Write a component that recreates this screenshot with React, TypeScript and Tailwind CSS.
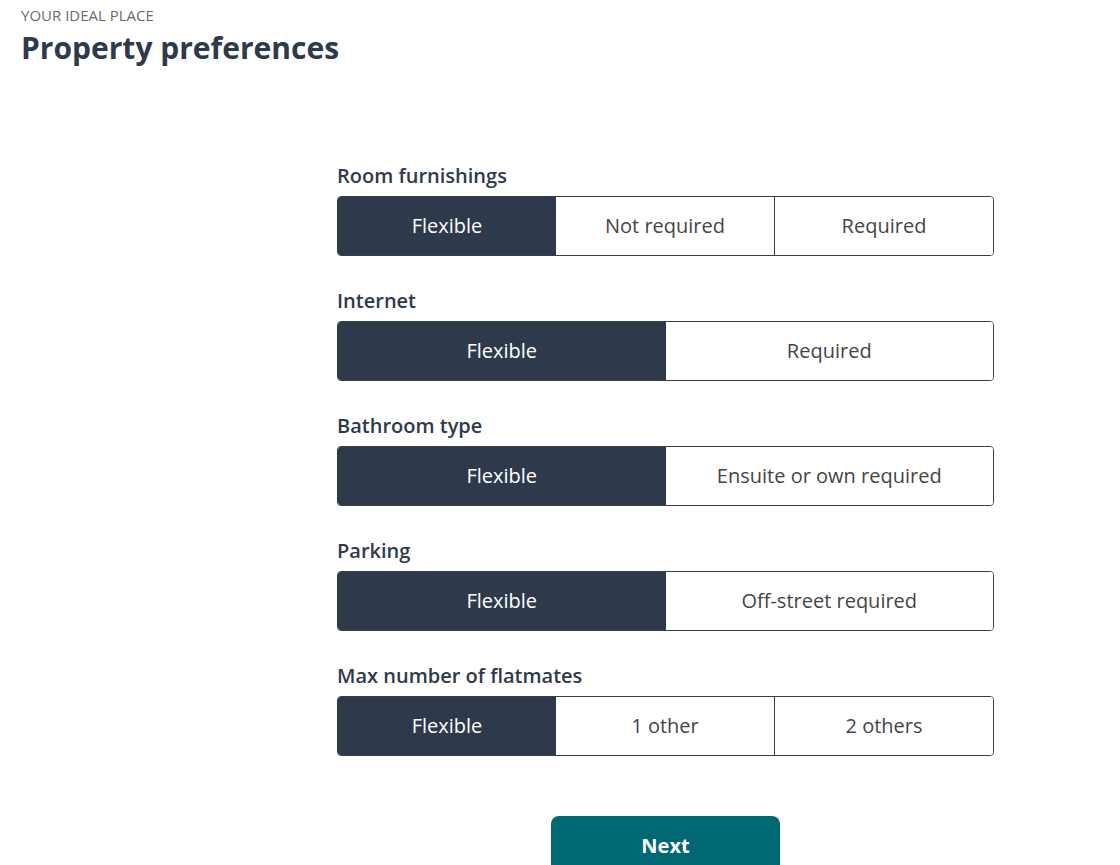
const dark = "bg-[#2e3a4b] text-white";

type Group = { label: string; options: string[] };

const groups: Group[] = [
  { label: "Room furnishings", options: ["Flexible", "Not required", "Required"] },
  { label: "Internet", options: ["Flexible", "Required"] },
  { label: "Bathroom type", options: ["Flexible", "Ensuite or own required"] },
  { label: "Parking", options: ["Flexible", "Off-street required"] },
  { label: "Max number of flatmates", options: ["Flexible", "1 other", "2 others"] },
];

function Segmented({ options }: { options: string[] }) {
  return (
    <div className="flex h-[60px] overflow-hidden rounded-[4px] border border-[#3a3f47]">
      {options.map((opt, i) => (
        <button
          key={opt}
          className={
            "flex flex-1 items-center justify-center text-[20px] " +
            (i === 0
              ? dark
              : "bg-white text-[#454545] " + (i > 1 ? "border-l border-[#3a3f47]" : ""))
          }
        >
          {opt}
        </button>
      ))}
    </div>
  );
}

export default function App() {
  return (
    <div className="min-h-screen bg-white font-['Open_Sans',sans-serif] text-[#2e3a4b]">
      <div className="px-[21px] pt-[5px]">
        <p className="text-[15px] leading-[20px] text-[#6b6b6b]">YOUR IDEAL PLACE</p>
        <h1 className="mt-[4px] text-[30px] font-bold leading-[38px]">Property preferences</h1>
      </div>

      <div className="ml-[337px] mt-[96px] w-[657px]">
        {groups.map((g) => (
          <div key={g.label} className="mb-[32px]">
            <p className="mb-[7px] text-[20px] font-semibold leading-[26px]">{g.label}</p>
            <Segmented options={g.options} />
          </div>
        ))}
        <div className="flex justify-center pt-[28px]">
          <button className="h-[60px] w-[229px] rounded-[8px] bg-[#006873] text-[20px] font-bold text-white">
            Next
          </button>
        </div>
      </div>
    </div>
  );
}
